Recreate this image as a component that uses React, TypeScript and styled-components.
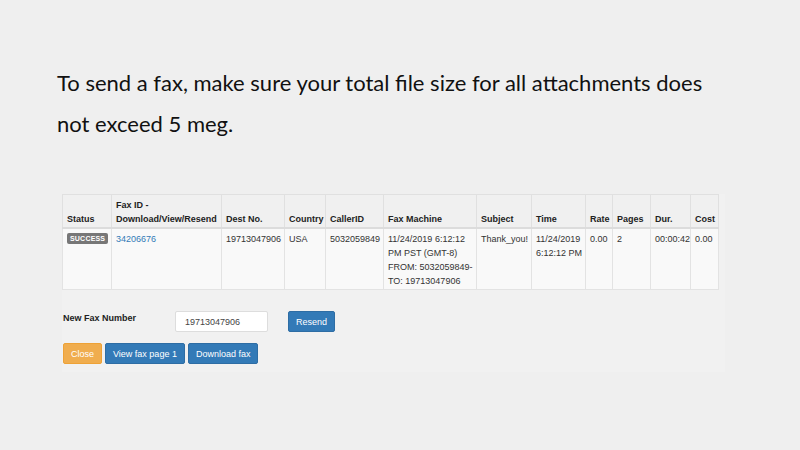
import styled, { createGlobalStyle } from 'styled-components'

const GlobalStyle = createGlobalStyle`
  html, body {
    margin: 0;
    padding: 0;
    background: #efefef;
  }
`

const columns = [
  { key: 'status', width: 49 },
  { key: 'faxid', width: 110 },
  { key: 'dest', width: 63 },
  { key: 'country', width: 41 },
  { key: 'caller', width: 58 },
  { key: 'machine', width: 93 },
  { key: 'subject', width: 55 },
  { key: 'time', width: 54 },
  { key: 'rate', width: 27 },
  { key: 'pages', width: 38 },
  { key: 'dur', width: 40 },
  { key: 'cost', width: 28 },
]

export default function App() {
  return (
    <Page>
      <GlobalStyle />
      <Notice>
        To send a fax, make sure your total file size for all attachments does
        not exceed 5 meg.
      </Notice>

      <Panel>
        <FaxTable>
          <colgroup>
            {columns.map((c) => (
              <col key={c.key} style={{ width: c.width }} />
            ))}
          </colgroup>
          <thead>
            <tr>
              <Th>Status</Th>
              <Th>
                Fax ID -<br />
                Download/View/Resend
              </Th>
              <Th>Dest No.</Th>
              <Th>Country</Th>
              <Th>CallerID</Th>
              <Th>Fax Machine</Th>
              <Th>Subject</Th>
              <Th>Time</Th>
              <Th>Rate</Th>
              <Th>Pages</Th>
              <Th>Dur.</Th>
              <Th>Cost</Th>
            </tr>
          </thead>
          <tbody>
            <tr>
              <Td>
                <Badge>Success</Badge>
              </Td>
              <Td>
                <FaxLink href="#">34206676</FaxLink>
              </Td>
              <Td>19713047906</Td>
              <Td>USA</Td>
              <Td>5032059849</Td>
              <Td>
                11/24/2019 6:12:12
                <br />
                PM PST (GMT-8)
                <br />
                FROM: 5032059849-
                <br />
                TO: 19713047906
              </Td>
              <Td>Thank_you!</Td>
              <Td>
                11/24/2019
                <br />
                6:12:12 PM
              </Td>
              <Td>0.00</Td>
              <Td>2</Td>
              <Td>00:00:42</Td>
              <Td>0.00</Td>
            </tr>
          </tbody>
        </FaxTable>

        <ResendRow>
          <FieldLabel>New Fax Number</FieldLabel>
          <NumberInput defaultValue="19713047906" />
          <Button $variant="primary">Resend</Button>
        </ResendRow>

        <ActionRow>
          <Button $variant="warning">Close</Button>
          <Button $variant="primary">View fax page 1</Button>
          <Button $variant="primary">Download fax</Button>
        </ActionRow>
      </Panel>
    </Page>
  )
}

const Page = styled.div`
  width: 800px;
  height: 450px;
  box-sizing: border-box;
  padding: 62px 0 0 57px;
  background: #efefef;
  overflow: hidden;
`

const Notice = styled.p`
  margin: 0;
  width: 680px;
  font-family: Lato, 'Liberation Sans', sans-serif;
  font-size: 22px;
  line-height: 41px;
  color: #111;
`

const Panel = styled.div`
  margin: 50px 0 0 5px;
  width: 663px;
  padding-bottom: 8px;
  background: #f1f1f1;
  font-family: 'Liberation Sans', Arial, sans-serif;
  font-size: 9px;
  color: #333;
`

const FaxTable = styled.table`
  width: 656px;
  table-layout: fixed;
  border-collapse: collapse;
  border: 1px solid #dedede;
  line-height: 14px;
`

const Th = styled.th`
  text-align: left;
  vertical-align: bottom;
  padding: 3px 4px 1px 4px;
  font-weight: bold;
  color: #222;
  background: #f0f0f0;
  border: 1px solid #e0e0e0;
  border-bottom: 2px solid #dcdcdc;
  white-space: nowrap;
`

const Td = styled.td`
  vertical-align: top;
  padding: 3px 4px 1px 4px;
  background: #f9f9f9;
  border: 1px solid #e3e3e3;
  color: #333;
  white-space: nowrap;
`

const Badge = styled.span`
  display: inline-block;
  padding: 1px 3px;
  border-radius: 2px;
  background: #777;
  color: #fff;
  font-size: 7px;
  line-height: 9px;
  font-weight: bold;
  text-transform: uppercase;
  letter-spacing: 0.2px;
  vertical-align: 1px;
`

const FaxLink = styled.a`
  color: #337ab7;
  text-decoration: none;
`

const ResendRow = styled.div`
  display: flex;
  align-items: flex-start;
  margin-top: 21px;
  padding-left: 1px;
`

const FieldLabel = styled.label`
  width: 112px;
  margin-top: 2px;
  font-weight: bold;
  color: #222;
`

const NumberInput = styled.input`
  box-sizing: border-box;
  width: 93px;
  height: 21px;
  padding: 0 9px;
  margin-right: 20px;
  border: 1px solid #ddd;
  border-radius: 2px;
  background: #fff;
  font-family: inherit;
  font-size: 9px;
  color: #444;
  outline: none;
`

const Button = styled.button<{ $variant: 'primary' | 'warning' }>`
  box-sizing: border-box;
  height: 21px;
  padding: 0 7px;
  border: 1px solid ${(p) => (p.$variant === 'warning' ? '#eea236' : '#2e6da4')};
  border-radius: 2px;
  background: ${(p) => (p.$variant === 'warning' ? '#f0ad4e' : '#337ab7')};
  color: #fff;
  font-family: inherit;
  font-size: 9px;
  cursor: pointer;
`

const ActionRow = styled.div`
  display: flex;
  gap: 3px;
  margin-top: 11px;
  padding-left: 1px;
`
